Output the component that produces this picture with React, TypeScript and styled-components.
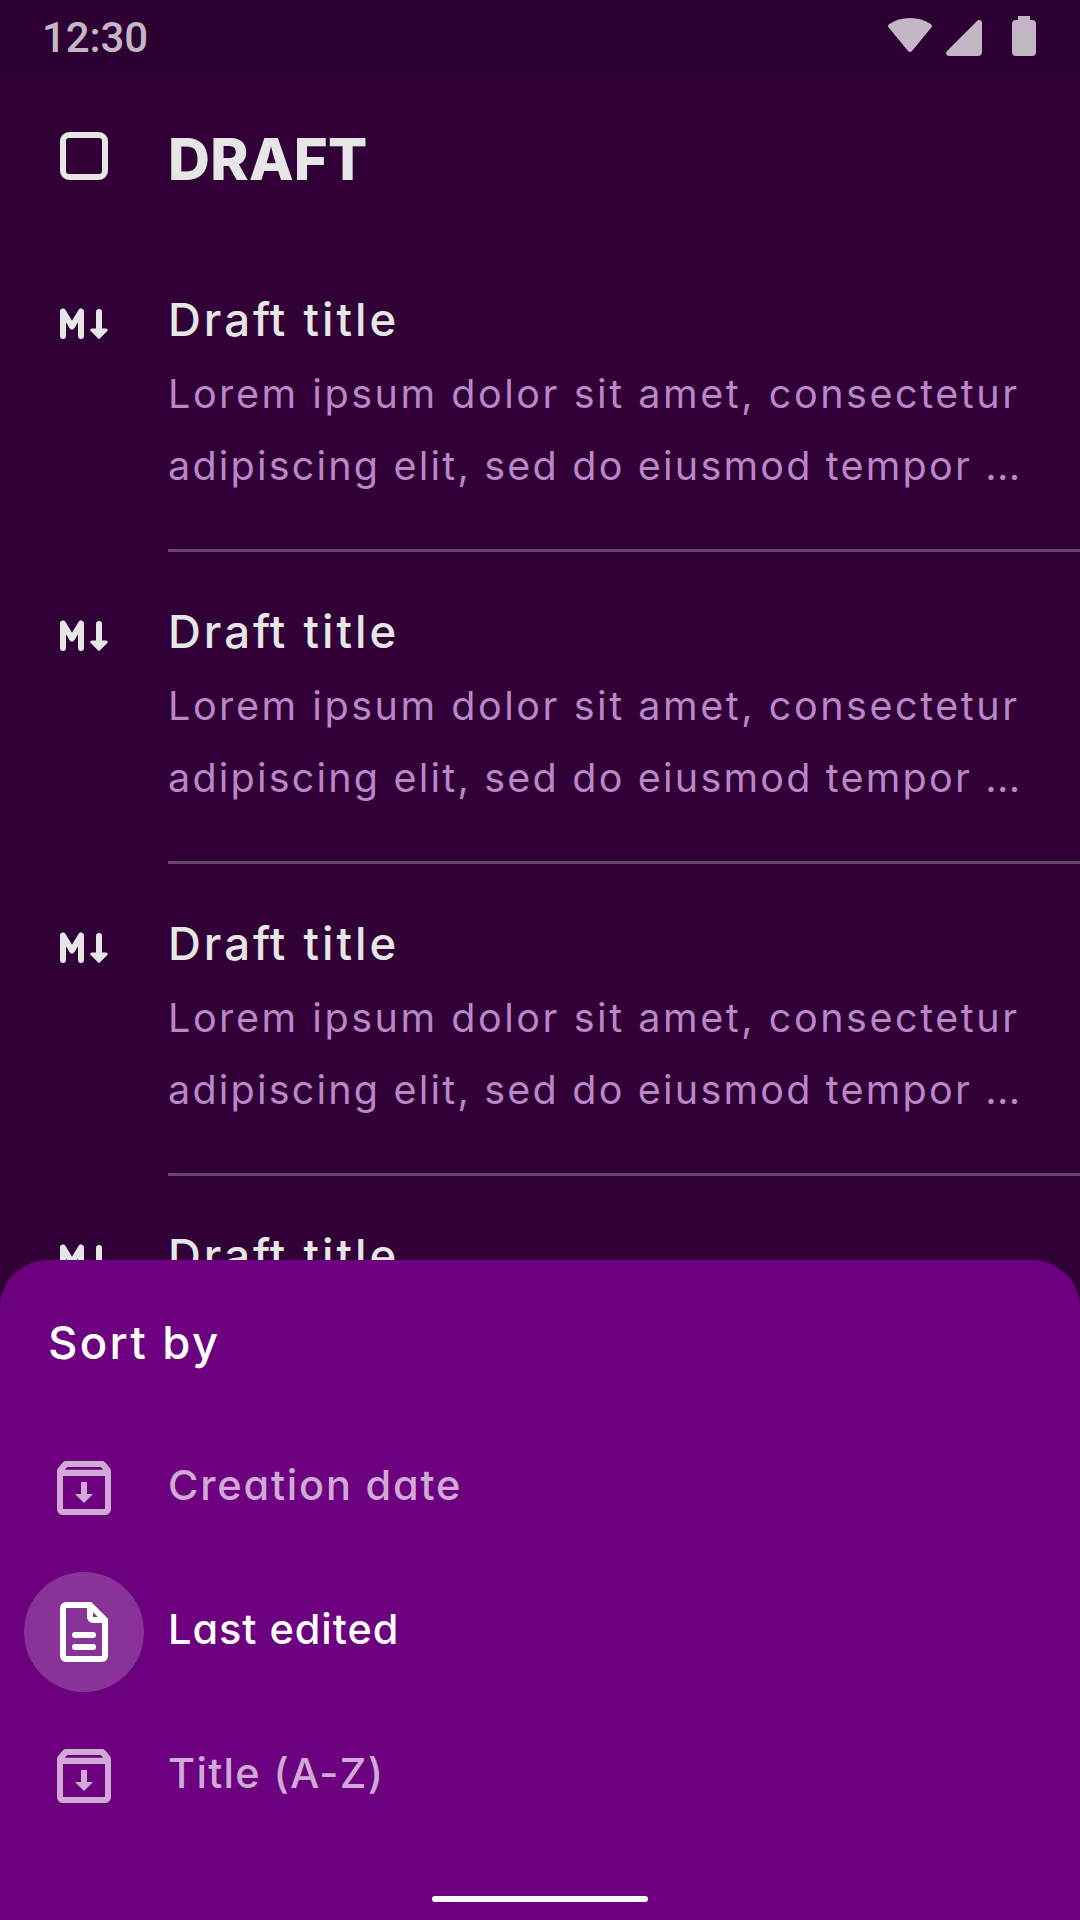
import React from 'react';
import styled, { createGlobalStyle } from 'styled-components';

const GlobalStyle = createGlobalStyle`
  * { box-sizing: border-box; }
  body { margin: 0; background: #300036; }
`;

const sans = `Inter, "Open Sans", "Liberation Sans", sans-serif`;

const Screen = styled.div`
  position: relative;
  width: 1080px;
  height: 1920px;
  overflow: hidden;
  background: #300036;
  color: #e6e6e6;
  font-family: ${sans};
  white-space: nowrap;
`;

const StatusBar = styled.header`
  display: flex;
  justify-content: space-between;
  height: 72px;
  padding: 0 44px 0 42px;
  background: #2d0033;
`;

const Clock = styled.time`
  font: 500 42px/76px Roboto, "Liberation Sans", sans-serif;
  letter-spacing: -0.1px;
  color: #c3b6c5;
`;

const StatusIcons = styled.svg`
  width: 148px;
  height: 72px;
  fill: #c3b6c5;
`;

const TitleBar = styled.div`
  display: grid;
  grid-template-columns: 168px 1fr;
  align-items: center;
  height: 168px;
`;

const Checkbox = styled.span`
  width: 48px;
  height: 48px;
  margin-left: 60px;
  border: 6px solid #e6e6e6;
  border-radius: 9px;
`;

const PageTitle = styled.h1`
  margin: 0;
  padding-top: 6px;
  font-size: 58px;
  font-weight: 800;
  line-height: 72px;
  letter-spacing: 0.3px;
`;

const DraftRow = styled.article`
  display: grid;
  grid-template-columns: 168px 1fr;
  height: 312px;
`;

const DraftIcon = styled.svg`
  width: 72px;
  height: 72px;
  margin: 48px 0 0 48px;
`;

const DraftBody = styled.div`
  padding-top: 48px;
  border-bottom: 3px solid #664569;
`;

const DraftTitle = styled.h2`
  margin: 0 0 6px;
  font-size: 45.5px;
  font-weight: 500;
  line-height: 64px;
  letter-spacing: 3px;
`;

const Joined = styled.span`
  letter-spacing: -0.5px;
`;

const Excerpt = styled.p<{ $tracking: number }>`
  margin: 0;
  font-size: 39.5px;
  font-weight: 400;
  line-height: 72px;
  letter-spacing: ${(p) => p.$tracking}px;
  color: #ba86c8;
`;

const Ellipsis = styled.span`
  letter-spacing: 0.4px;
`;

const Sheet = styled.section`
  position: absolute;
  inset: 1260px 0 0;
  display: flex;
  flex-direction: column;
  border-radius: 48px 48px 0 0;
  background: #6c007f;
  color: #fff;
`;

const SheetTitle = styled.h2`
  height: 156px;
  margin: 0;
  padding: 51px 0 0 48px;
  font-size: 45.5px;
  font-weight: 500;
  line-height: 64px;
  letter-spacing: 2.3px;
`;

const Option = styled.div<{ $active?: boolean }>`
  display: grid;
  grid-template-columns: 144px 1fr;
  align-items: center;
  height: 144px;
  padding-left: 24px;
  color: ${(p) => (p.$active ? '#fff' : '#d0a9d6')};
`;

const OptionIcon = styled.span<{ $active?: boolean }>`
  display: grid;
  place-items: center;
  width: 120px;
  height: 120px;
  border-radius: 50%;
  background: ${(p) => (p.$active ? '#893399' : 'transparent')};

  svg {
    width: 72px;
    height: 72px;
  }
`;

const OptionLabel = styled.span<{ $tracking: number }>`
  padding-bottom: 6px;
  font-size: 41.5px;
  font-weight: 500;
  line-height: 60px;
  letter-spacing: ${(p) => p.$tracking}px;
  font-feature-settings: 'cv11' 1;
`;

const HomeHandle = styled.div`
  width: 216px;
  height: 6px;
  margin: 48px auto 0;
  border-radius: 3px;
  background: #fff;
`;

const MarkdownIcon = () => (
  <DraftIcon viewBox="0 0 72 72" fill="none" stroke="#e6e6e6" strokeWidth="6" strokeLinecap="round">
    <path d="M15 48V23.500L24 38.500L33 23.500V48" strokeLinejoin="round" />
    <path d="M51 24v18" />
    <path d="M43.7 42h14.6L51 49.3z" fill="#e6e6e6" strokeWidth="3" strokeLinejoin="round" />
  </DraftIcon>
);

const ArchiveIcon = () => (
  <svg viewBox="0 0 24 24" fill="currentColor">
    <path
      fillRule="evenodd"
      d="M20.54 5.23l-1.39-1.68C18.88 3.21 18.47 3 18 3H6c-.47 0-.88.21-1.16.55L3.46 5.23C3.17 5.57 3 6.02 3 6.5V19c0 1.1.9 2 2 2h14c1.1 0 2-.9 2-2V6.5c0-.48-.17-.93-.46-1.27zM6.4 5h11.2l.75.9H5.65zM5 19V8h14v11z"
    />
    <path d="M11 10h2v4h2l-3 3-3-3h2z" />
  </svg>
);

const FileIcon = () => (
  <svg viewBox="0 0 24 24" fill="none" stroke="currentColor" strokeWidth="2">
    <path d="M14 3H6a1 1 0 0 0-1 1v16a1 1 0 0 0 1 1h12a1 1 0 0 0 1-1V8z" />
    <path d="M14 3v4a1 1 0 0 0 1 1h4" />
    <path d="M9 13h6M9 17h6" strokeLinecap="round" />
  </svg>
);

const options = [
  { label: 'Creation date', Icon: ArchiveIcon, tracking: 1.8 },
  { label: 'Last edited', Icon: FileIcon, active: true, tracking: 0.95 },
  { label: 'Title (A-Z)', Icon: ArchiveIcon, tracking: 1.3 },
];

export default function App() {
  return (
    <Screen>
      <GlobalStyle />
      <StatusBar>
        <Clock>12:30</Clock>
        <StatusIcons viewBox="888 0 148 72">
          <path d="M888.5 27.200Q887.300 25.500 889 24.300Q898.500 18 910 18Q921.500 18 931 24.300Q932.700 25.500 931.500 27.200L912 51Q910 53 908 51Z" />
          <path d="M947 51L976.800 21.200Q978.600 19.400 980.500 20.200Q982 21 982 23V51.500Q982 56 977.500 56H949Q946.800 56 946.200 54.300Q945.700 52.500 947 51Z" />
          <path d="M1018 16h12v4h2a4 4 0 0 1 4 4v28a4 4 0 0 1-4 4h-16a4 4 0 0 1-4-4v-28a4 4 0 0 1 4-4h2z" />
        </StatusIcons>
      </StatusBar>
      <TitleBar>
        <Checkbox />
        <PageTitle>DRAFT</PageTitle>
      </TitleBar>
      {[0, 1, 2, 3].map((id) => (
        <DraftRow key={id}>
          <MarkdownIcon />
          <DraftBody>
            <DraftTitle>
              Dra<Joined>f</Joined>t title
            </DraftTitle>
            <Excerpt $tracking={2.55}>Lorem ipsum dolor sit amet, consectetur</Excerpt>
            <Excerpt $tracking={2.2}>
              adipiscing elit, sed do eiusmod tempor <Ellipsis>...</Ellipsis>
            </Excerpt>
          </DraftBody>
        </DraftRow>
      ))}
      <Sheet>
        <SheetTitle>Sort by</SheetTitle>
        {options.map(({ label, Icon, active, tracking }) => (
          <Option key={label} $active={active}>
            <OptionIcon $active={active}>
              <Icon />
            </OptionIcon>
            <OptionLabel $tracking={tracking}>{label}</OptionLabel>
          </Option>
        ))}
        <HomeHandle />
      </Sheet>
    </Screen>
  );
}
